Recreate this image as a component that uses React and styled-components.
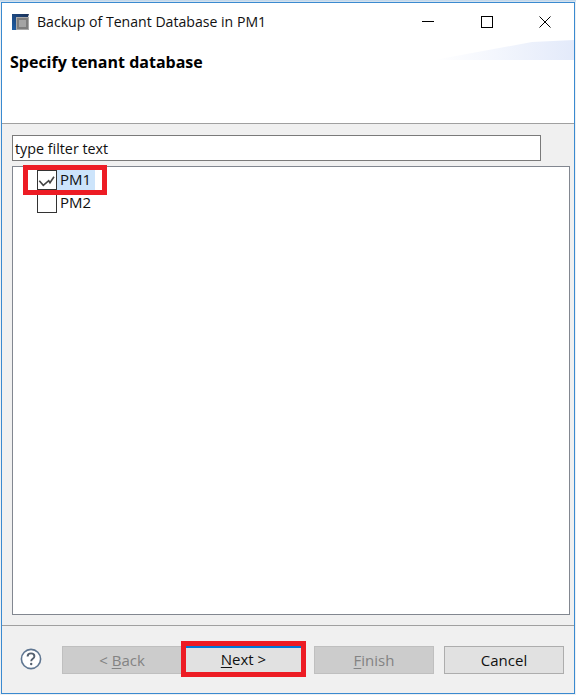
import React from "react";
import styled, { createGlobalStyle } from "styled-components";

const GlobalStyle = createGlobalStyle`
  html, body {
    margin: 0;
    padding: 0;
    background: #eef0f2;
  }
  body {
    font-family: "Open Sans", "Noto Sans", "Liberation Sans", sans-serif;
  }
`;

const Page = styled.div`
  width: 576px;
  height: 695px;
  padding: 2px 1px 0 1px;
  box-sizing: border-box;
  background: linear-gradient(#b9d3ea, #eef0f2 3px);
  overflow: hidden;
`;

const Window = styled.div`
  width: 574px;
  height: 692px;
  box-sizing: border-box;
  border: 1px solid #3a8ad0;
  background: #f0f0f0;
  display: flex;
  flex-direction: column;
`;

const TitleBar = styled.div`
  height: 37px;
  flex: none;
  background: #fff;
  display: flex;
  align-items: center;
  padding-left: 9px;
`;

const TitleText = styled.div`
  flex: 1;
  margin-left: 7px;
  font-size: 14.1px;
  color: #111;
  white-space: nowrap;
`;

const WinButton = styled.div`
  width: 58px;
  height: 37px;
  display: flex;
  align-items: center;
  justify-content: center;
`;

const Header = styled.div`
  height: 84px;
  flex: none;
  box-sizing: border-box;
  background: #fff;
  border-bottom: 1px solid #a0a0a0;
  position: relative;
  padding: 11px 0 0 8px;
`;

const Banner = styled.div`
  position: absolute;
  right: 0;
  top: 0;
  width: 140px;
  height: 20px;
  background: linear-gradient(90deg, #fff 0%, #f3f6fd 45%, #e3eafa 100%);
  clip-path: polygon(0 100%, 35% 55%, 70% 10%, 100% 0, 100% 100%);
`;

const Heading = styled.div`
  font-size: 16px;
  font-weight: 700;
  color: #000;
  position: relative;
`;

const Body = styled.div`
  flex: 1;
  display: flex;
  flex-direction: column;
  padding: 11px 4px 10px 10px;
  gap: 5px;
  min-height: 0;
`;

const FilterInput = styled.div`
  width: 529px;
  height: 26px;
  flex: none;
  box-sizing: border-box;
  border: 1px solid #7a7a7a;
  background: #fff;
  font-size: 14.3px;
  line-height: 25px;
  padding-left: 2px;
  color: #111;
`;

const Tree = styled.div`
  flex: 1;
  box-sizing: border-box;
  border: 1px solid #828790;
  background: #fff;
  padding: 1px 0 0 24px;
  position: relative;
`;

const Row = styled.div`
  height: 23px;
  display: flex;
  align-items: center;
`;

const Check = styled.div`
  width: 18px;
  height: 18px;
  flex: none;
  border: 1px solid #333;
  background: #fff;
`;

const RowLabel = styled.div`
  font-size: 15px;
  height: 20px;
  line-height: 18px;
  padding: 0 4px 0 3px;
  color: #111;
  background: ${(p) => (p.$selected ? "#cce4fb" : "transparent")};
`;

const RowMark = styled.div`
  position: absolute;
  left: 10px;
  top: -2px;
  width: 74px;
  height: 20px;
  border: 5px solid #ed1c24;
  pointer-events: none;
`;

const Footer = styled.div`
  height: 68px;
  flex: none;
  box-sizing: border-box;
  border-top: 1px solid #a0a0a0;
  display: flex;
  align-items: flex-start;
  padding: 20px 9px 0 18px;
`;

const Help = styled.div`
  width: 22px;
  height: 22px;
  margin: 2px 20px 0 0;
`;

const Btn = styled.div`
  width: 120px;
  height: 28px;
  box-sizing: border-box;
  margin-left: ${(p) => p.$gap || 0}px;
  border: 1px solid ${(p) => (p.$disabled ? "#bfbfbf" : "#adadad")};
  background: ${(p) => (p.$disabled ? "#cccccc" : "#e1e1e1")};
  color: ${(p) => (p.$disabled ? "#838383" : "#111")};
  font-size: 15px;
  line-height: 27px;
  text-align: center;
  u {
    text-underline-offset: 2px;
  }
`;

const NextMark = styled.div`
  width: 125px;
  height: 36px;
  box-sizing: border-box;
  margin: -5px 8px 0 -1px;
  border: 5px solid #ed1c24;
  background: #e1e1e1;
  color: #111;
  font-size: 15px;
  line-height: 27px;
  text-align: center;
  position: relative;
  u {
    text-underline-offset: 2px;
  }
  &::before {
    content: "";
    position: absolute;
    left: 0;
    right: 0;
    top: 0;
    height: 2px;
    background: #0078d7;
  }
`;

const AppIcon = () => (
  <svg width="19" height="19" viewBox="0 0 19 19">
    <defs>
      <linearGradient id="appBg" x1="0" y1="1" x2="1" y2="0">
        <stop offset="0" stopColor="#1d5fa8" />
        <stop offset="1" stopColor="#1a2f55" />
      </linearGradient>
    </defs>
    <path d="M1 2h17l-1 3v13H3l-2 0z" fill="url(#appBg)" />
    <rect x="5.5" y="5.5" width="12" height="12" fill="#7d7d7d" stroke="#a8a8a8" />
    <rect x="8" y="8" width="7" height="7" fill="#a4a4a4" />
  </svg>
);

const HelpIcon = () => (
  <svg width="22" height="22" viewBox="0 0 22 22">
    <circle cx="11" cy="11" r="9.6" fill="#fff" stroke="#5f7691" strokeWidth="1.6" />
    <path d="M7.6 8.4c0-2 1.5-3 3.4-3s3.4 1 3.4 2.8c0 2.6-3.2 2.6-3.2 5" fill="none" stroke="#54606f" strokeWidth="1.9" />
    <circle cx="11.2" cy="16" r="1.2" fill="#54606f" />
  </svg>
);

const CheckMark = () => (
  <svg width="18" height="18" viewBox="0 0 18 18">
    <path d="M1.3 9.7l4 4.6 5.4-4.6 1.3 2 4-6" fill="none" stroke="#444" strokeWidth="1.6" />
  </svg>
);

const App = () => {
  return (
    <Page>
      <GlobalStyle />
      <Window>
        <TitleBar>
          <AppIcon />
          <TitleText>Backup of Tenant Database in PM1</TitleText>
          <WinButton>
            <svg width="14" height="12" viewBox="0 0 14 12">
              <path d="M0 5.5h12" stroke="#000" fill="none" />
            </svg>
          </WinButton>
          <WinButton>
            <svg width="12" height="12" viewBox="0 0 12 12">
              <rect x="0.5" y="0.5" width="11" height="11" stroke="#000" fill="none" />
            </svg>
          </WinButton>
          <WinButton>
            <svg width="12" height="12" viewBox="0 0 12 12">
              <path d="M0.5 0.5l11 11M11.5 0.5l-11 11" stroke="#000" fill="none" />
            </svg>
          </WinButton>
        </TitleBar>
        <Header>
          <Banner />
          <Heading>Specify tenant database</Heading>
        </Header>
        <Body>
          <FilterInput>type filter text</FilterInput>
          <Tree>
            <RowMark />
            <Row>
              <Check>
                <CheckMark />
              </Check>
              <RowLabel $selected>PM1</RowLabel>
            </Row>
            <Row>
              <Check />
              <RowLabel>PM2</RowLabel>
            </Row>
          </Tree>
        </Body>
        <Footer>
          <Help>
            <HelpIcon />
          </Help>
          <Btn $disabled>
            &lt; <u>B</u>ack
          </Btn>
          <NextMark>
            <u>N</u>ext &gt;
          </NextMark>
          <Btn $disabled>
            <u>F</u>inish
          </Btn>
          <Btn $gap={10}>Cancel</Btn>
        </Footer>
      </Window>
    </Page>
  );
};

export default App;
